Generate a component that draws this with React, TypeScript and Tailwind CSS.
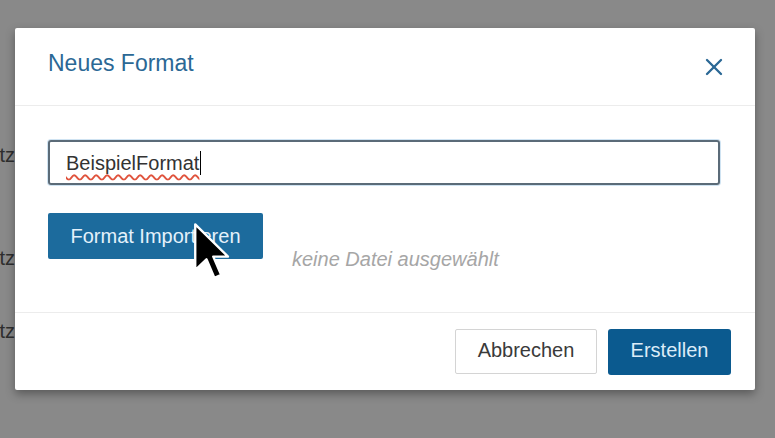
import { X } from "lucide-react";

export default function App() {
  return (
    <main
      className="relative h-[438px] w-full overflow-hidden bg-[#898989]"
      style={{ fontFamily: '"Liberation Sans", Arial, sans-serif' }}
    >
      {/* Seite im Hintergrund */}
      <div className="flex w-[15px] flex-col overflow-hidden text-[20px] leading-6 text-[#2e2e2e]">
        <div className="mt-[143px] flex justify-end whitespace-nowrap">Ersatz</div>
        <div className="mt-[79px] flex justify-end whitespace-nowrap">Ersatz</div>
        <div className="mt-[49px] flex justify-end whitespace-nowrap">Ersatz</div>
      </div>

      {/* Dialog */}
      <div className="absolute left-[15px] top-[28px] flex w-[740px] flex-col rounded-[2px] bg-white shadow-[0_4px_10px_rgba(0,0,0,0.35)]">
        <header className="flex h-[78px] items-center justify-between border-b border-[#ececec] pl-[33px] pr-[27px]">
          <h2 className="pb-[6px] text-[23px] text-[#2b6895]">Neues Format</h2>
          <X className="h-[28px] w-[28px] text-[#2b6895]" strokeWidth={2} />
        </header>

        <div className="flex flex-col pb-[41px] pl-[33px] pr-[35px] pt-[34px]">
          <div className="flex h-[45px] items-center rounded-[3px] border-2 border-[#5b6b78] px-4 shadow-[0_0_0_1px_#cfe3f2] text-[20px] text-[#333]">
            <span className="underline decoration-wavy decoration-[#e0533d] decoration-[1.5px] underline-offset-4 [text-decoration-skip-ink:none]">
              BeispielFormat
            </span>
            <span className="ml-px h-[24px] w-px bg-black" />
          </div>

          <div className="mt-[28px] flex items-start">
            <button className="h-[46px] w-[215px] rounded-[2px] bg-[#1c6b9d] text-[20px] text-[#e4f1fb]">
              Format Importieren
            </button>
            <span className="ml-[29px] mt-[34px] text-[20px] italic leading-6 text-[#a6a6a6]">
              keine Datei ausgewählt
            </span>
          </div>
        </div>

        <footer className="flex h-[78px] items-center justify-end gap-[11px] border-t border-[#ececec] pr-[24px]">
          <button className="h-[45px] w-[142px] rounded-[2px] border border-[#d4d4d4] bg-white pb-1 text-[20px] text-[#3a3a3a]">
            Abbrechen
          </button>
          <button className="h-[46px] w-[123px] rounded-[3px] bg-[#0b5a8f] pb-1 text-[20px] text-[#dcecf8]">
            Erstellen
          </button>
        </footer>
      </div>

      {/* Mauszeiger */}
      <svg
        className="absolute left-[190px] top-[220px]"
        width="40"
        height="62"
        viewBox="-1 -1 13 21"
      >
        <path
          d="M0.5 0.5 L0.5 16 L4.3 12.3 L7 18.6 L9.3 17.6 L6.6 11.4 L11.6 11.4 Z"
          fill="#000"
          stroke="#fff"
          strokeWidth="0.8"
          strokeLinejoin="round"
        />
      </svg>
    </main>
  );
}
